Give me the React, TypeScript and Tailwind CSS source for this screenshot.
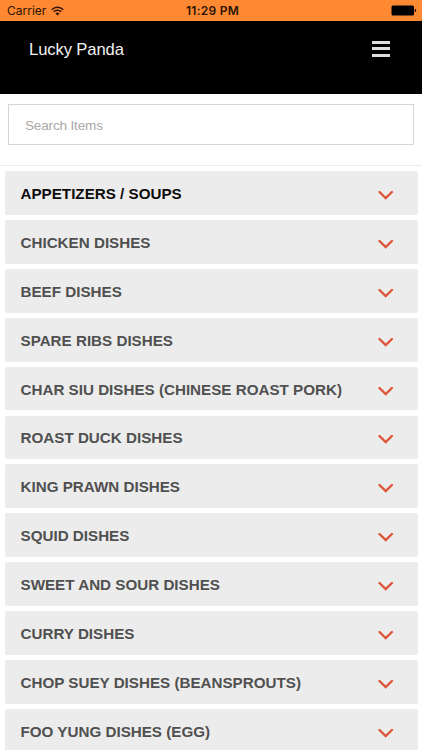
const categories = [
  'APPETIZERS / SOUPS',
  'CHICKEN DISHES',
  'BEEF DISHES',
  'SPARE RIBS DISHES',
  'CHAR SIU DISHES (CHINESE ROAST PORK)',
  'ROAST DUCK DISHES',
  'KING PRAWN DISHES',
  'SQUID DISHES',
  'SWEET AND SOUR DISHES',
  'CURRY DISHES',
  'CHOP SUEY DISHES (BEANSPROUTS)',
  'FOO YUNG DISHES (EGG)',
];

function StatusBar() {
  return (
    <div className="grid h-[21px] shrink-0 grid-cols-3 items-center bg-[#ff8833] pr-[5px] pl-[7px] font-['Inter',sans-serif] text-[12px] leading-[21px] text-[#2a1404]">
      <div className="flex items-center gap-[5px]">
        <span>Carrier</span>
        <svg width="13" height="10" viewBox="0 0 13 10" fill="none" stroke="#2a1404" strokeWidth="1.6">
          <path d="M0.8 3.7a8 8 0 0 1 11.4 0" />
          <path d="M2.8 5.8a5.2 5.2 0 0 1 7.4 0" />
          <path d="M6.5 9.4 4.5 7.4a2.8 2.8 0 0 1 4 0z" fill="#2a1404" stroke="none" />
        </svg>
      </div>
      <span className="pl-px text-center font-semibold tracking-[0.25px] whitespace-nowrap">11:29 PM</span>
      <div className="flex justify-end">
        <svg width="26" height="11" viewBox="0 0 26 11">
          <rect x="0.5" y="0.5" width="22.5" height="10" rx="1.5" fill="#000" />
          <path d="M23.8 3.8c1.8.5 1.8 2.9 0 3.4z" fill="#000" />
        </svg>
      </div>
    </div>
  );
}

function Header() {
  return (
    <header className="flex h-[73px] shrink-0 items-start justify-between bg-black pr-8 pl-[29px]">
      <h1 className="mt-[19px] text-[16.6px] leading-5 tracking-[-0.1px] text-[#f2f2f2]">Lucky Panda</h1>
      <button aria-label="Menu" className="mt-[20.3px] flex w-[18px] flex-col gap-[3.2px]">
        <span className="h-[3px] w-full bg-[#dedede]" />
        <span className="h-[3px] w-full bg-[#dedede]" />
        <span className="h-[3px] w-full bg-[#dedede]" />
      </button>
    </header>
  );
}

function CategoryRow({ name, active }: { name: string; active: boolean }) {
  return (
    <button className="flex h-[43.75px] w-full shrink-0 items-center justify-between rounded-[2px] bg-[#ececec] pr-6 pl-4 text-left">
      <span className={`pt-[2px] text-[15.2px] leading-5 font-bold whitespace-nowrap ${active ? 'text-[#0d0d0d]' : 'text-[#505050]'}`}>
        {name}
      </span>
      <svg className="mt-1" width="16" height="10" viewBox="0 0 16 10" fill="none" stroke="#dd5538" strokeWidth="2.4" strokeLinecap="round">
        <path d="M1.5 2 7.7 8 13.9 2" />
      </svg>
    </button>
  );
}

export default function App() {
  return (
    <div className="flex h-[750px] w-[422px] flex-col overflow-hidden bg-white font-['Liberation_Sans',Arial,sans-serif]">
      <StatusBar />
      <Header />
      <div className="h-[72px] shrink-0 border-b border-[#ebebeb] px-2 pt-[10px]">
        <input
          type="text"
          placeholder="Search Items"
          className="h-[41px] w-full border border-[#d6d6d6] px-4 pt-[2px] text-[13.5px] tracking-[-0.15px] text-[#333] outline-none placeholder:text-[#a8a8a8]"
        />
      </div>
      <main className="flex flex-col gap-[5.12px] px-[4.5px] pt-[5.3px]">
        {categories.map((name, i) => (
          <CategoryRow key={name} name={name} active={i === 0} />
        ))}
      </main>
    </div>
  );
}
